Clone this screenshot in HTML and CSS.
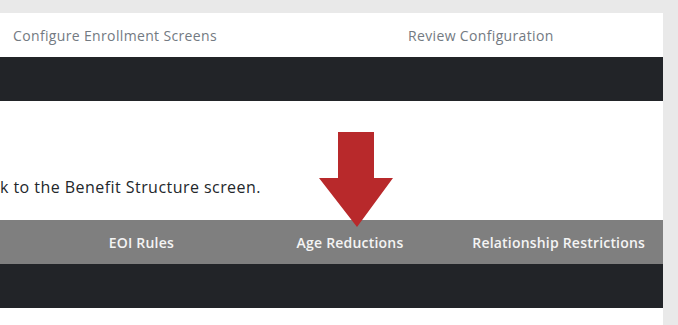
FILE: index.html
```html
<!DOCTYPE html>
<html lang="en">

<head>
    <meta charset="UTF-8">
    <meta name="viewport" content="width=device-width, initial-scale=1.0">
    <title>Plan Setup</title>
    <link rel="stylesheet" href="styles.css">
</head>

<body>
    <div class="page">
        <div class="steps">
            <span class="step">Configure Enrollment Screens</span>
            <span class="step">Review Configuration</span>
        </div>
        <div class="darkbar"></div>

        <div class="content">
            <p class="note">k to the Benefit Structure screen.</p>
        </div>

        <div class="tabs">
            <span class="tab">EOI Rules</span>
            <span class="tab">Age Reductions</span>
            <span class="tab">Relationship Restrictions</span>
        </div>
        <div class="darkbar"></div>

        <!-- callout arrow pointing at the Age Reductions tab -->
        <svg class="arrow" width="75" height="95" viewBox="0 0 75 95">
            <polygon points="19,0 55,0 55,46 74,46 38,95 0,46 19,46" fill="#b8292b" />
        </svg>
    </div>
</body>

</html>
```

FILE: styles.css
```css
body {
    margin: 0;
    background: #e9e9e9;
    font-family: 'Open Sans', sans-serif;
}

.page {
    position: relative;
    width: 663px;
    margin-top: 13px;
    background: #fff;
    padding-bottom: 17px;
}

.steps {
    display: flex;
    align-items: center;
    height: 44px;
    padding-left: 13px;
    font-size: 14px;
    letter-spacing: 0.35px;
    color: #737a82;
}

.step:first-child {
    width: 395px;
}

.darkbar {
    height: 44px;
    background: #222428;
}

.content {
    height: 119px;
    display: flex;
    align-items: flex-end;
}

.note {
    margin: 0 0 22px 0;
    font-size: 16px;
    letter-spacing: 0.45px;
    color: #23272b;
}

.tabs {
    display: flex;
    align-items: center;
    height: 44px;
    padding-left: 37px;
    background: #7f7f7f;
}

.tab {
    flex: 1;
    text-align: center;
    font-size: 14px;
    font-weight: 600;
    letter-spacing: 0.2px;
    color: #f4f4f4;
}

.arrow {
    position: absolute;
    left: 319px;
    top: 119px;
}
```
